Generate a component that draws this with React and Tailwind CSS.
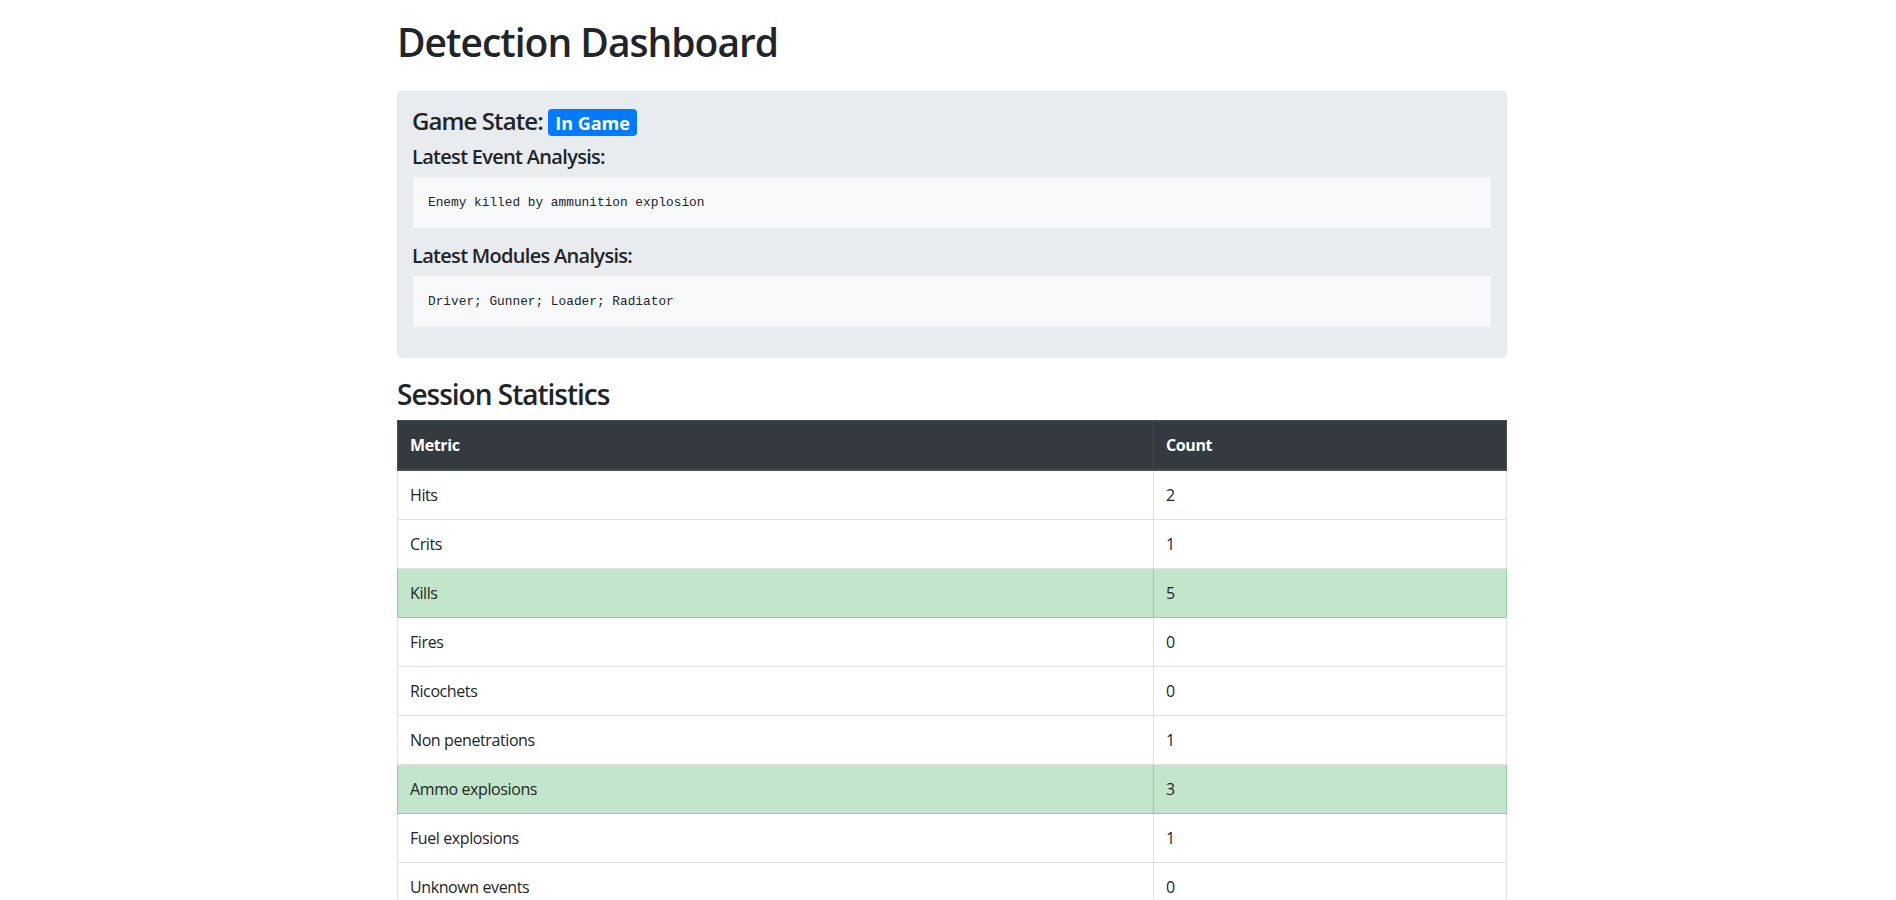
import React from 'react';

const stats = [
  { name: 'Hits', count: 2 },
  { name: 'Crits', count: 1 },
  { name: 'Kills', count: 5, success: true },
  { name: 'Fires', count: 0 },
  { name: 'Ricochets', count: 0 },
  { name: 'Non penetrations', count: 1 },
  { name: 'Ammo explosions', count: 3, success: true },
  { name: 'Fuel explosions', count: 1 },
  { name: 'Unknown events', count: 0 },
];

const AnalysisBlock = ({ title, text }) => (
  <div>
    <h5 className="text-[20px] font-semibold leading-[1.2] tracking-[-0.7px] -ml-px mb-2">{title}</h5>
    <pre className="bg-[#f8f9fa] rounded-[4px] p-[15px] mb-4 font-['Liberation_Mono',monospace] text-[12.8px] leading-[21px] text-[#212529]">
      {text}
    </pre>
  </div>
);

const App = () => {
  return (
    <div className="min-h-screen bg-white flex justify-center pl-2 text-[#212529] font-['Open_Sans','Noto_Sans',sans-serif]">
      <div className="w-[1110px]">
        <h1 className="text-[39px] font-semibold leading-[1.2] tracking-[-1px] mt-[19px] mb-[25px]">Detection Dashboard</h1>

        {/* game state panel */}
        <div className="bg-[#e9ecef] rounded-[5px] px-4 pt-4 pb-[15px] mb-5">
          <h4 className="text-[24px] font-semibold leading-[1.2] tracking-[-0.9px] -ml-px mb-[9px]">
            Game State:{' '}
            <span className="inline-block align-baseline bg-[#007bff] text-white text-[18px] font-bold leading-none tracking-normal px-[7px] py-[4.5px] rounded-[4px]">
              In Game
            </span>
          </h4>
          <AnalysisBlock title="Latest Event Analysis:" text="Enemy killed by ammunition explosion" />
          <AnalysisBlock title="Latest Modules Analysis:" text="Driver; Gunner; Loader; Radiator" />
        </div>

        <h3 className="text-[28px] font-semibold leading-[1.2] tracking-[-1px] mb-2">Session Statistics</h3>
        <table className="w-full border-collapse text-[16px] leading-6 tracking-[-0.4px]">
          <thead>
            <tr className="bg-[#343a40] text-white">
              <th className="w-[756px] text-left font-bold p-3 border border-[#454d55] border-b-2">Metric</th>
              <th className="text-left font-bold p-3 border border-[#454d55] border-b-2">Count</th>
            </tr>
          </thead>
          <tbody>
            {stats.map((s) => (
              <tr key={s.name} className={s.success ? 'bg-[#c3e6cb]' : ''}>
                <td className={`p-3 border ${s.success ? 'border-[#8fd19e]' : 'border-[#dee2e6]'}`}>{s.name}</td>
                <td className={`p-3 border ${s.success ? 'border-[#8fd19e]' : 'border-[#dee2e6]'}`}>{s.count}</td>
              </tr>
            ))}
          </tbody>
        </table>
      </div>
    </div>
  );
};

export default App;
